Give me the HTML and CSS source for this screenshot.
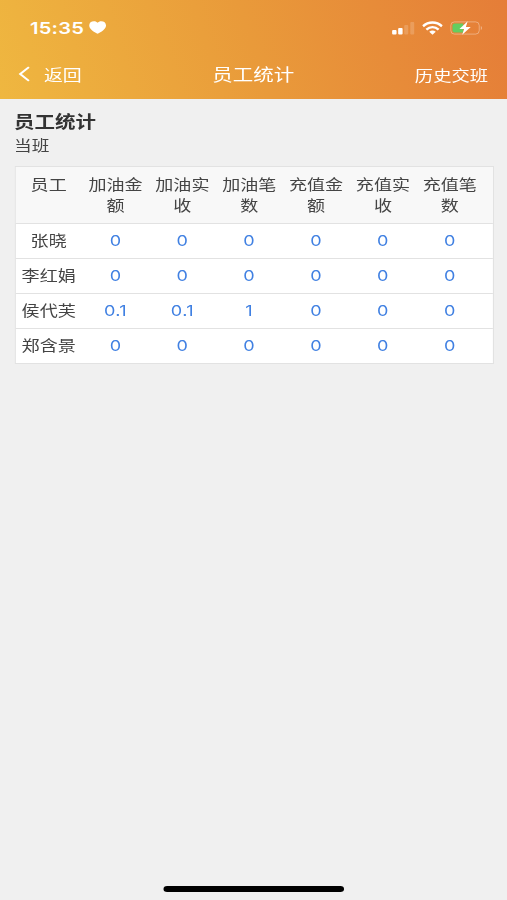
FILE: index.html
```
<!DOCTYPE html>
<html lang="zh-CN">

<head>
  <meta charset="utf-8">
  <title>员工统计</title>
  <link rel="stylesheet" href="styles.css">
</head>

<body>
  <div class="phone">
    <header class="header">
      <div class="status-bar">
        <div class="status-left">
          <span class="time">15:35</span>
          <svg width="14" height="13" viewBox="0 0 14 13" preserveAspectRatio="none">
            <path d="M7 12.8C5 11.400 0.100 8.400 0.100 4.400C0.100 1.800 1.800 0.200 4 0.200C5.300 0.200 6.400 0.800 7 1.800C7.600 0.800 8.700 0.200 10 0.200C12.200 0.200 13.900 1.800 13.900 4.400C13.900 8.400 9 11.400 7 12.800Z" fill="#fff"/>
          </svg>
        </div>
        <div class="status-right">
          <svg width="19" height="14" viewBox="0 0 23 14" preserveAspectRatio="none">
            <rect x="0.500" y="9" width="4.400" height="4.500" rx="1" fill="#fff"/>
            <rect x="6.500" y="7" width="4.400" height="6.500" rx="1" fill="#fff"/>
            <rect x="12.500" y="4" width="4" height="9.500" rx="1" fill="#fff" opacity=".18"/>
            <rect x="18.500" y="1" width="4" height="12.500" rx="1" fill="#fff" opacity=".18"/>
          </svg>
          <svg width="17" height="14" viewBox="0 0 21 14" preserveAspectRatio="none">
            <g fill="none" stroke="#fff" stroke-width="2.500">
              <path d="M0.900 5.200C6.300 0.300 14.700 0.300 20.100 5.200"/>
              <path d="M4.300 8.600C8 5.300 13 5.300 16.700 8.600"/>
            </g>
            <path d="M7.200 10.700C9.200 9.100 11.800 9.100 13.800 10.700L10.500 13.800Z" fill="#fff"/>
          </svg>
          <svg width="27" height="14" viewBox="0 0 33 14" preserveAspectRatio="none">
            <rect x="0.600" y="0.900" width="28.500" height="12.200" rx="3.600" fill="none" stroke="#fff" stroke-opacity=".35"/>
            <path d="M30.700 5V9C32.300 8.500 32.300 5.500 30.700 5Z" fill="#fff" opacity=".4"/>
            <path d="M4.500 2.500H13V11.500H4.500Q2.300 11.500 2.300 9.300V4.700Q2.300 2.500 4.500 2.500Z" fill="#65cd60"/>
            <path d="M17.500 0.300L9.300 8H14L12 13.700L20.600 6H15.700Z" fill="#fff"/>
          </svg>
        </div>
      </div>
      <nav class="nav-bar">
        <a class="back">
          <svg width="10" height="16" viewBox="0 0 10 16">
            <path d="M8.700 1.200L1.500 8L8.700 14.800" fill="none" stroke="#fff" stroke-width="1.800"/>
          </svg>
          <span>返回</span>
        </a>
        <h1 class="nav-title">员工统计</h1>
        <a class="history">历史交班</a>
      </nav>
    </header>

    <main class="content">
      <h2 class="title">员工统计</h2>
      <p class="subtitle">当班</p>

      <div class="table">
        <div class="row row-head">
          <div>员工</div>
          <div>加油金额</div>
          <div>加油实收</div>
          <div>加油笔数</div>
          <div>充值金额</div>
          <div>充值实收</div>
          <div>充值笔数</div>
        </div>
        <div class="row">
          <div class="name">张晓</div>
          <div>0</div><div>0</div><div>0</div><div>0</div><div>0</div><div>0</div>
        </div>
        <div class="row">
          <div class="name">李红娟</div>
          <div>0</div><div>0</div><div>0</div><div>0</div><div>0</div><div>0</div>
        </div>
        <div class="row">
          <div class="name">侯代芙</div>
          <div>0.1</div><div>0.1</div><div>1</div><div>0</div><div>0</div><div>0</div>
        </div>
        <div class="row">
          <div class="name">郑含景</div>
          <div>0</div><div>0</div><div>0</div><div>0</div><div>0</div><div>0</div>
        </div>
      </div>
    </main>

    <div class="home-bar"></div>
  </div>
</body>

</html>
```
FILE: styles.css
```
* {
  box-sizing: border-box;
}

body {
  margin: 0;
  overflow: hidden;
  background: #f0f0f0;
  font-family: Inter, "Noto Sans CJK SC", sans-serif;
  color: #444;
}

/* wide glyphs: the screen is laid out narrow and stretched to full width */
.phone {
  display: flex;
  flex-direction: column;
  width: 415.57px;
  height: 900px;
  transform: scaleX(1.22);
  transform-origin: 0 0;
}

.header {
  height: 99px;
  background: linear-gradient(75deg, #efb740 0%, #e99a3a 50%, #e57d38 100%);
  color: #fff;
}

.status-bar {
  display: flex;
  justify-content: space-between;
  height: 54px;
  padding: 1px 19.5px 0 24.5px;
}

.status-left,
.status-right {
  display: flex;
  align-items: center;
}

.status-left {
  gap: 4px;
}

.status-right {
  gap: 6px;
}

.time {
  font-size: 16.5px;
  font-weight: 600;
  letter-spacing: 0.2px;
}

.nav-bar {
  display: grid;
  grid-template-columns: 1fr auto 1fr;
  align-items: center;
  height: 40px;
  padding: 0 15.5px 0 15px;
}

.back {
  display: flex;
  align-items: center;
  gap: 11px;
  font-size: 15.5px;
}

.nav-title {
  margin: 0;
  font-size: 16.8px;
  font-weight: 400;
}

.history {
  justify-self: end;
  font-size: 15px;
}

.content {
  flex: 1;
  padding: 11px 11px 0 11.5px;
}

.title {
  margin: 0;
  font-size: 16.8px;
  line-height: 24px;
  font-weight: 700;
  color: #333;
}

.subtitle {
  margin: 0;
  font-size: 14.5px;
  line-height: 23px;
}

.table {
  margin-top: 9px;
  border: 1px solid #e2e2e2;
  background: #fff;
}

.row {
  display: grid;
  grid-template-columns: repeat(7, 54.8px);
  height: 35px;
  line-height: 34px;
  font-size: 14.8px;
  letter-spacing: 0.3px;
  text-align: center;
  color: #4080e2;
}

.row + .row {
  border-top: 1px solid #e2e2e2;
}

.row-head {
  height: 56px;
  padding-top: 8px;
  line-height: 21px;
  letter-spacing: 0;
  background: #f8f8f8;
  color: #444;
}

.row-head div {
  padding: 0 5px;
}

.name {
  line-height: 35px;
  letter-spacing: 0;
  color: #444;
}

.home-bar {
  align-self: center;
  width: 148px;
  height: 6px;
  margin-bottom: 8px;
  border-radius: 3px;
  background: #000;
}
```
